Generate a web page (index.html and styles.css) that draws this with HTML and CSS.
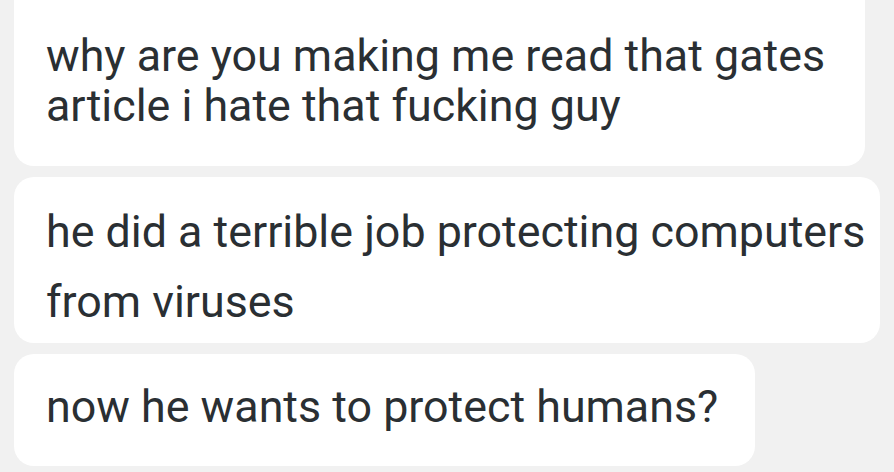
FILE: index.html
```html
<!DOCTYPE html>
<html lang="en">
<head>
<meta charset="utf-8">
<title>Chat</title>
<link rel="stylesheet" href="styles.css">
</head>
<body>
  <div class="thread">
    <div class="bubble bubble-first">why are you making me read that gates<br>article i hate that fucking guy</div>
    <div class="bubble bubble-wide">he did a terrible job protecting computers<br>from viruses</div>
    <div class="bubble bubble-last">now he wants to protect humans?</div>
  </div>
</body>
</html>
```
FILE: styles.css
```css
html, body {
  margin: 0;
  padding: 0;
  background: #f1f1f1;
}
body {
  width: 894px;
  height: 472px;
  overflow: hidden;
  font-family: Roboto, "Liberation Sans", sans-serif;
  color: #2a2f33;
}
.thread {
  display: flex;
  flex-direction: column;
  align-items: flex-start;
  gap: 11px;
  margin-top: -30px;
  padding-left: 14px;
}
.bubble {
  background: #ffffff;
  border-radius: 20px;
  font-size: 44.8px;
  white-space: nowrap;
  box-sizing: border-box;
  padding-left: 32px;
}
.bubble-first {
  width: 851px;
  line-height: 50px;
  padding-top: 61px;
  padding-bottom: 35px;
}
.bubble-wide {
  width: 866px;
  line-height: 70px;
  padding-top: 20px;
  padding-bottom: 6px;
}
.bubble-last {
  line-height: 52px;
  padding: 27px 37px 33px 32px;
}
```
